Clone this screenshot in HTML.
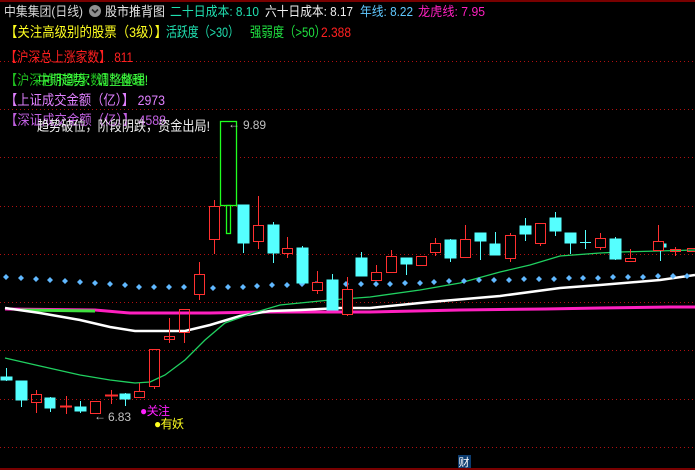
<!DOCTYPE html>
<html><head><meta charset="utf-8"><style>
html,body{margin:0;padding:0;background:#000;width:695px;height:470px;overflow:hidden}
svg{display:block}
text{font-family:"Liberation Sans","Noto Sans CJK SC",sans-serif}
</style></head><body>
<svg width="695" height="470" viewBox="0 0 695 470" xmlns="http://www.w3.org/2000/svg">
<rect width="695" height="470" fill="#000"/>
<line x1="0" y1="1" x2="695" y2="1" stroke="#a00000" stroke-width="1.5"/>
<line x1="0" y1="469" x2="695" y2="469" stroke="#a00000" stroke-width="1.5"/>
<g stroke="#b01010" stroke-width="1" stroke-dasharray="1,3">
<line x1="0" y1="61.5" x2="695" y2="61.5"/><line x1="0" y1="109.5" x2="695" y2="109.5"/>
<line x1="0" y1="157.5" x2="695" y2="157.5"/><line x1="0" y1="206.5" x2="695" y2="206.5"/>
<line x1="0" y1="254.5" x2="695" y2="254.5"/><line x1="0" y1="302.5" x2="695" y2="302.5"/>
<line x1="0" y1="350.5" x2="695" y2="350.5"/><line x1="0" y1="399.5" x2="695" y2="399.5"/>
<line x1="0" y1="447.5" x2="695" y2="447.5"/>
</g>
<!-- lines -->
<polyline fill="none" stroke="#ff20c0" stroke-width="3" points="5,309 95,310 130,313 210,313 260,312 370,312 460,310 545,309 600,308 670,307 695,307"/>
<polyline fill="none" stroke="#40e040" stroke-width="3" points="20,310 95,311"/>
<polyline fill="none" stroke="#ffffff" stroke-width="2.5" points="5,308 40,313 80,320 110,327 135,331 185,331 210,325 240,316 270,311 300,310 340,308 370,308 430,302 500,296 560,288 600,285 660,280 695,275"/>
<polyline fill="none" stroke="#20d060" stroke-width="1.3" points="5,358 40,366 80,375 110,380 135,383 150,382 165,375 185,360 205,340 225,323 253,313 280,305 330,300 370,297 420,290 460,283 500,272 530,265 560,256 600,253 620,252 695,250"/>
<!-- dots -->
<g fill="#60b8ff">
<path d="M6,274l3,3l-3,3l-3,-3z M21,275l3,3l-3,3l-3,-3z M36,276l3,3l-3,3l-3,-3z M50,277l3,3l-3,3l-3,-3z M65,278l3,3l-3,3l-3,-3z M80,279l3,3l-3,3l-3,-3z M95,280l3,3l-3,3l-3,-3z M110,281l3,3l-3,3l-3,-3z M125,282l3,3l-3,3l-3,-3z M139,284l3,3l-3,3l-3,-3z M154,284l3,3l-3,3l-3,-3z M169,284l3,3l-3,3l-3,-3z M184,284l3,3l-3,3l-3,-3z M198,284l3,3l-3,3l-3,-3z M213,285l3,3l-3,3l-3,-3z M228,284l3,3l-3,3l-3,-3z M243,284l3,3l-3,3l-3,-3z M257,283l3,3l-3,3l-3,-3z M272,282l3,3l-3,3l-3,-3z M287,282l3,3l-3,3l-3,-3z M302,281l3,3l-3,3l-3,-3z M316,281l3,3l-3,3l-3,-3z M332,281l3,3l-3,3l-3,-3z M346,281l3,3l-3,3l-3,-3z M361,281l3,3l-3,3l-3,-3z M376,281l3,3l-3,3l-3,-3z M390,281l3,3l-3,3l-3,-3z M405,280l3,3l-3,3l-3,-3z M420,280l3,3l-3,3l-3,-3z M434,279l3,3l-3,3l-3,-3z M449,278l3,3l-3,3l-3,-3z M464,278l3,3l-3,3l-3,-3z M479,277l3,3l-3,3l-3,-3z M494,277l3,3l-3,3l-3,-3z M509,277l3,3l-3,3l-3,-3z M524,276l3,3l-3,3l-3,-3z M539,276l3,3l-3,3l-3,-3z M554,276l3,3l-3,3l-3,-3z M569,275l3,3l-3,3l-3,-3z M583,275l3,3l-3,3l-3,-3z M598,275l3,3l-3,3l-3,-3z M613,274l3,3l-3,3l-3,-3z M628,274l3,3l-3,3l-3,-3z M643,274l3,3l-3,3l-3,-3z M658,273l3,3l-3,3l-3,-3z M673,273l3,3l-3,3l-3,-3z M687,273l3,3l-3,3l-3,-3z"/>
</g>
<!-- cyan candles -->
<g stroke="#55ffff" fill="#55ffff" stroke-width="1">
<line x1="6.5" y1="368" x2="6.5" y2="381"/><rect x="1" y="377" width="11" height="3"/>
<line x1="21.5" y1="395" x2="21.5" y2="407"/><rect x="16" y="381" width="11" height="19"/>
<line x1="50.5" y1="397" x2="50.5" y2="412"/><rect x="45" y="398" width="10" height="10"/>
<line x1="80.5" y1="401" x2="80.5" y2="413"/><rect x="75" y="407" width="11" height="4"/>
<line x1="125.5" y1="393" x2="125.5" y2="406"/><rect x="120" y="394" width="10" height="5"/>
<line x1="243.5" y1="240" x2="243.5" y2="253"/><rect x="238" y="205" width="11" height="38"/>
<line x1="273.5" y1="222" x2="273.5" y2="263"/><rect x="268" y="225" width="11" height="28"/>
<line x1="302.5" y1="246" x2="302.5" y2="250"/><rect x="297" y="248" width="11" height="35"/>
<line x1="332.5" y1="274" x2="332.5" y2="282"/><rect x="327" y="280" width="11" height="30"/>
<line x1="361.5" y1="252" x2="361.5" y2="260"/><rect x="356" y="258" width="11" height="18"/>
<line x1="406.5" y1="258" x2="406.5" y2="275"/><rect x="401" y="258" width="11" height="6"/>
<line x1="450.5" y1="239" x2="450.5" y2="262"/><rect x="445" y="240" width="11" height="18"/>
<line x1="480.5" y1="233" x2="480.5" y2="260"/><rect x="475" y="233" width="11" height="8"/>
<line x1="495.5" y1="232" x2="495.5" y2="255"/><rect x="490" y="244" width="10" height="11"/>
<line x1="525.5" y1="218" x2="525.5" y2="241"/><rect x="520" y="226" width="11" height="8"/>
<line x1="555.5" y1="212" x2="555.5" y2="236"/><rect x="550" y="218" width="11" height="13"/>
<line x1="570.5" y1="233" x2="570.5" y2="254"/><rect x="565" y="233" width="11" height="10"/>
<line x1="585.5" y1="230" x2="585.5" y2="249"/><line x1="580" y1="242.5" x2="591" y2="242.5"/>
<line x1="615.5" y1="237" x2="615.5" y2="260"/><rect x="610" y="239" width="11" height="20"/>
<line x1="660.5" y1="242" x2="660.5" y2="261"/><rect x="655" y="244" width="11" height="3"/>
</g>
<!-- red candles -->
<g stroke="#ff3030" fill="none" stroke-width="1">
<line x1="36.5" y1="390" x2="36.5" y2="394"/><line x1="36.5" y1="402" x2="36.5" y2="413"/><rect x="31.5" y="394.5" width="10" height="8"/>
<line x1="66.5" y1="396" x2="66.5" y2="414"/><line x1="60" y1="406.5" x2="72" y2="406.5" stroke-width="2"/>
<rect x="90.5" y="401.5" width="10" height="12"/>
<line x1="111.5" y1="390" x2="111.5" y2="404"/><line x1="105" y1="395.5" x2="118" y2="395.5" stroke-width="2"/>
<line x1="139.5" y1="383" x2="139.5" y2="391"/><rect x="134.5" y="391.5" width="10" height="6"/>
<rect x="149.5" y="349.5" width="10" height="37"/><line x1="154.5" y1="387" x2="154.5" y2="389"/>
<line x1="169.5" y1="318" x2="169.5" y2="343"/><rect x="164.5" y="336.5" width="10" height="3"/>
<rect x="179.5" y="309.5" width="10" height="23"/><line x1="184.5" y1="333" x2="184.5" y2="343"/>
<line x1="199.5" y1="262" x2="199.5" y2="300"/><rect x="194.5" y="274.5" width="10" height="20" fill="#000"/>
<line x1="214.5" y1="200" x2="214.5" y2="254"/><rect x="209.5" y="206.5" width="10" height="33" fill="#000"/>
<line x1="258.5" y1="196" x2="258.5" y2="249"/><rect x="253.5" y="225.5" width="10" height="16" fill="#000"/>
<line x1="287.5" y1="237" x2="287.5" y2="258"/><rect x="282.5" y="248.5" width="10" height="5" fill="#000"/>
<line x1="317.5" y1="271" x2="317.5" y2="294"/><rect x="312.5" y="282.5" width="10" height="8" fill="#000"/>
<line x1="347.5" y1="277" x2="347.5" y2="316"/><rect x="342.5" y="289.5" width="10" height="25" fill="#000"/>
<line x1="376.5" y1="265" x2="376.5" y2="272"/><rect x="371.5" y="272.5" width="10" height="8"/>
<line x1="391.5" y1="250" x2="391.5" y2="256"/><rect x="386.5" y="256.5" width="10" height="16"/>
<rect x="416.5" y="256.5" width="10" height="9"/>
<line x1="435.5" y1="238" x2="435.5" y2="256"/><rect x="430.5" y="243.5" width="10" height="9" fill="#000"/>
<line x1="465.5" y1="225" x2="465.5" y2="258"/><rect x="460.5" y="239.5" width="10" height="18" fill="#000"/>
<line x1="510.5" y1="233" x2="510.5" y2="262"/><rect x="505.5" y="235.5" width="10" height="23" fill="#000"/>
<line x1="540.5" y1="243" x2="540.5" y2="246"/><rect x="535.5" y="223.5" width="10" height="20"/>
<line x1="600.5" y1="233" x2="600.5" y2="250"/><rect x="595.5" y="238.5" width="10" height="9" fill="#000"/>
<line x1="630.5" y1="249" x2="630.5" y2="258"/><rect x="625.5" y="258.5" width="10" height="3"/>
<line x1="658.5" y1="225" x2="658.5" y2="251"/><rect x="653.5" y="241.5" width="10" height="9" fill="#000"/>
<line x1="675.5" y1="247" x2="675.5" y2="256"/><rect x="670.5" y="249.5" width="10" height="2"/>
<rect x="687.5" y="248.5" width="10" height="3"/>
</g>
<!-- green big candle -->
<g stroke="#20ff20" fill="#000" stroke-width="1.3">
<rect x="220.5" y="121.5" width="16" height="84"/>
<rect x="226.5" y="205.5" width="4" height="28"/>
</g>
<!-- labels -->
<text x="228" y="128" font-size="12" fill="#c0c0c0">←</text>
<text x="243" y="129" font-size="12" fill="#c0c0c0" textLength="23">9.89</text>
<text x="94" y="420" font-size="12" fill="#c0c0c0">←</text>
<text x="108" y="421" font-size="12" fill="#c0c0c0" textLength="23">6.83</text>
<text x="140" y="415" font-size="12" fill="#ff20ff" textLength="30">●关注</text>
<text x="154" y="428" font-size="12" fill="#ffff20" textLength="30">●有妖</text>
<rect x="458" y="455" width="13" height="13" fill="#0c3c70"/>
<text x="458.5" y="466" font-size="11" fill="#ffffff">财</text>
<!-- header -->
<text x="4" y="16" font-size="13" fill="#d8d8d8" textLength="79" lengthAdjust="spacingAndGlyphs">中集集团(日线)</text>
<circle cx="95" cy="11" r="6" fill="#909090"/>
<path d="M92,9.5l3,3l3,-3" stroke="#222" stroke-width="1.6" fill="none"/>
<text x="105" y="16" font-size="13" fill="#e8e8e8" textLength="60" lengthAdjust="spacingAndGlyphs">股市推背图</text>
<text x="170" y="16" font-size="13" fill="#20e0b0" textLength="89" lengthAdjust="spacingAndGlyphs">二十日成本: 8.10</text>
<text x="265" y="16" font-size="13" fill="#f0f0f0" textLength="88" lengthAdjust="spacingAndGlyphs">六十日成本: 8.17</text>
<text x="360" y="16" font-size="13" fill="#60c8ff" textLength="53" lengthAdjust="spacingAndGlyphs">年线: 8.22</text>
<text x="418" y="16" font-size="13" fill="#ff20c0" textLength="67" lengthAdjust="spacingAndGlyphs">龙虎线: 7.95</text>
<text x="5" y="37" font-size="14" fill="#ffff20" textLength="162" lengthAdjust="spacingAndGlyphs">【关注高级别的股票（3级）】</text>
<text x="166" y="37" font-size="14" fill="#20e0b0" textLength="73" lengthAdjust="spacingAndGlyphs">活跃度（&gt;30）</text>
<text x="250" y="37" font-size="14" fill="#20e040" textLength="76" lengthAdjust="spacingAndGlyphs">强弱度（&gt;50）</text>
<text x="321" y="37" font-size="14" fill="#ff2020" textLength="30" lengthAdjust="spacingAndGlyphs">2.388</text>
<text x="5" y="62" font-size="14" fill="#ff2020" textLength="128" lengthAdjust="spacingAndGlyphs">【沪深总上涨家数】 811</text>
<text x="5" y="85" font-size="14" fill="#20c020" textLength="140" lengthAdjust="spacingAndGlyphs">【沪深总下跌家数】 4488</text>
<text x="38" y="85" font-size="14" fill="#40ff40" textLength="110" lengthAdjust="spacingAndGlyphs">中期趋势：调整整理!</text>
<text x="5" y="105" font-size="14" fill="#e080ff" textLength="160" lengthAdjust="spacingAndGlyphs">【上证成交金额（亿）】 2973</text>
<text x="5" y="125" font-size="14" fill="#c060e0" textLength="161" lengthAdjust="spacingAndGlyphs">【深证成交金额（亿）】 4588</text>
<text x="37" y="131" font-size="14" fill="#f0f0f0" textLength="173" lengthAdjust="spacingAndGlyphs">趋势破位，阶段阴跌，资金出局!</text>
</svg>
</body></html>
